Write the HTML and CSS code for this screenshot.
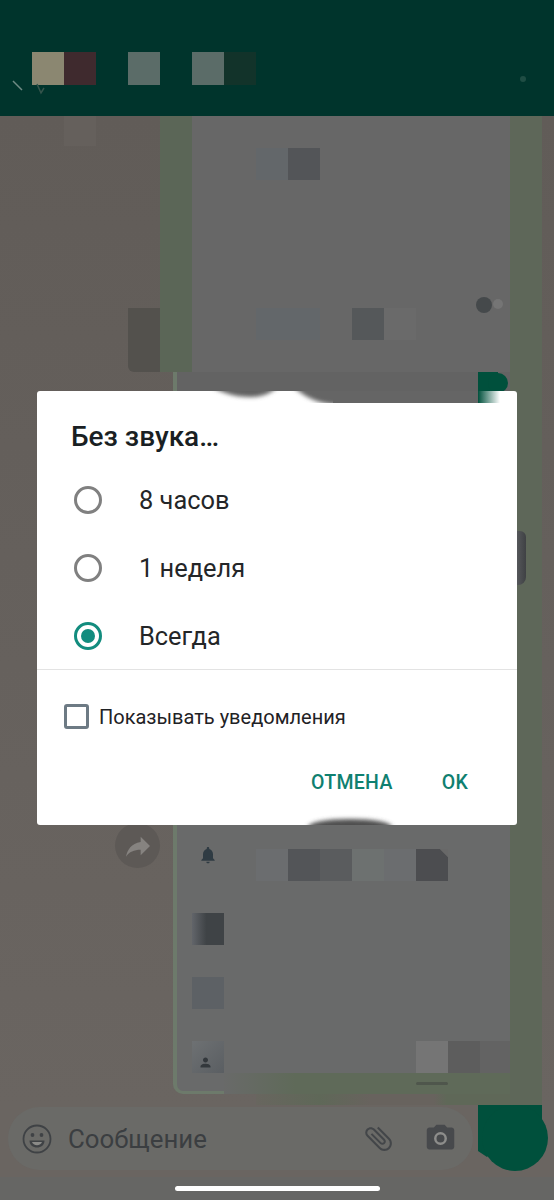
FILE: index.html
```html
<!DOCTYPE html>
<html lang="ru">
<head>
<meta charset="utf-8">
<title>Без звука</title>
<link rel="stylesheet" href="styles.css">
</head>
<body>
<div class="app">
  <header class="topbar">
    <svg class="ticks" viewBox="0 0 40 24" width="40" height="24"><path d="M3 3l9 9" stroke="#6f8a84" stroke-width="1.500"/><path d="M27 6l4 9 3-5" stroke="#35544c" stroke-width="1.500" fill="none"/></svg>
    <div class="name-row">
      <span class="hb hb-beige"></span><span class="hb hb-wine"></span>
      <span class="hb hb-teal hb-gap"></span>
      <span class="hb hb-teal hb-gap"></span><span class="hb hb-dark"></span>
    </div>
    <span class="menu-dot"></span>
  </header>

  <main class="chat">
    <div class="wall-patch"></div>
    <div class="stripe-top"></div>
    <div class="stripe-right"></div>
    <div class="bubble-top"></div>
    <div class="bubble-low"></div>
    <div class="foot-right"></div>
    <div class="foot-band"></div>
    <div class="bubble-foot"></div>
    <div class="foot-mark"></div>

    <div class="t t-a t1"></div><div class="t t-b t2"></div>
    <div class="t t-c t3"></div>
    <div class="t t-a t4"></div>
    <div class="t t-e t5"></div>
    <div class="t t-f t6"></div>

    <div class="t t-g t7"></div><div class="t t-b t8"></div><div class="t t-h t9"></div>
    <div class="t t-i t10"></div><div class="t t-g t11"></div><div class="t t-j t12"></div>
    <div class="bell-cell">
      <svg viewBox="0 0 24 24" width="20" height="20"><path fill="#2f3b43" d="M12 22c1.100 0 2-.9 2-2h-4c0 1.100.9 2 2 2zm6-6v-5c0-3.070-1.630-5.640-4.500-6.320V4c0-.83-.67-1.500-1.500-1.500s-1.500.67-1.500 1.500v.68C7.640 5.360 6 7.920 6 11v5l-2 2v1h16v-1l-2-2z"/></svg>
    </div>

    <div class="t t-k t13"></div>
    <div class="t t-l t14"></div>
    <div class="t t-m t15">
      <svg viewBox="0 0 24 24" width="15" height="15"><path fill="#33383c" d="M12 12c2.200 0 4-1.800 4-4s-1.800-4-4-4-4 1.800-4 4 1.800 4 4 4zm0 2c-2.700 0-8 1.300-8 4v2h16v-2c0-2.700-5.300-4-8-4z"/></svg>
    </div>
    <div class="t t-n t16"></div><div class="t t-o t17"></div><div class="t t-p t18"></div>

    <svg class="read-mark" viewBox="0 0 32 40" width="32" height="40"><path fill="#00503c" d="M0 0h20v40H0z"/><circle cx="20" cy="11" r="10" fill="#00503c"/></svg>
    <svg class="scroll-dot" viewBox="0 0 34 18" width="34" height="18"><circle cx="24" cy="8" r="5" fill="#757575"/><circle cx="10" cy="9" r="8" fill="#45494b"/></svg>
    <div class="forward">
      <svg viewBox="0 0 24 24" width="32" height="32"><path fill="#868380" d="M14 9V5l7 7-7 7v-4.100c-5 0-8.500 1.600-11 5.100 1-5 4-10 11-11z"/></svg>
    </div>
  </main>

  <footer class="bottom">
    <div class="input-row">
      <div class="composer">
        <svg class="ic-emoji" viewBox="0 0 30 30" width="30" height="30">
          <circle cx="15" cy="15" r="13.500" fill="none" stroke="#3f4245" stroke-width="1.800"/>
          <circle cx="10.500" cy="11" r="1.900" fill="#3f4245"/><circle cx="19.500" cy="11" r="1.900" fill="#3f4245"/>
          <path d="M7.500 16.500h15c0 4.500-3.400 7-7.500 7s-7.500-2.500-7.500-7z" fill="#3f4245"/>
          <path d="M10 18h10c-.6 2-2.600 3.200-5 3.200S10.600 20 10 18z" fill="#8b8b88"/>
        </svg>
        <span class="placeholder">Сообщение</span>
        <svg class="ic-clip" viewBox="0 0 24 24" width="33" height="33"><path fill="#434649" d="M16.500 6v11.500c0 2.210-1.790 4-4 4s-4-1.790-4-4V5c0-1.380 1.120-2.500 2.500-2.500s2.500 1.120 2.500 2.500v10.500c0 .55-.45 1-1 1s-1-.45-1-1V6H10v9.500c0 1.380 1.120 2.500 2.500 2.500s2.500-1.120 2.500-2.500V5c0-2.210-1.790-4-4-4S7 2.790 7 5v12.500c0 3.040 2.460 5.500 5.500 5.500s5.500-2.460 5.500-5.500V6h-1.500z"/></svg>
        <svg class="ic-cam" viewBox="0 0 24 24" width="33" height="33"><path fill="#47494c" d="M9 2L7.170 4H4c-1.100 0-2 .9-2 2v12c0 1.100.9 2 2 2h16c1.100 0 2-.9 2-2V6c0-1.100-.9-2-2-2h-3.170L15 2H9z"/><circle cx="12" cy="12" r="3.800" fill="#47494c" stroke="#8d8d8b" stroke-width="1.800"/></svg>
      </div>
      <svg class="send" viewBox="0 0 70 66" width="70" height="66"><path fill="#00503c" d="M0 0h64v40H20L9 52 0 46z"/><circle cx="37" cy="33" r="33" fill="#00503c"/></svg>
    </div>
    <div class="navbar"><span class="pill"></span></div>
  </footer>

  <section class="dialog" role="dialog">
    <h2 class="dialog-title">Без звука…</h2>
    <div class="options">
      <div class="option"><span class="radio"></span><span>8 часов</span></div>
      <div class="option"><span class="radio"></span><span>1 неделя</span></div>
      <div class="option"><span class="radio radio-on"></span><span>Всегда</span></div>
    </div>
    <div class="check-row"><span class="checkbox"></span><span>Показывать уведомления</span></div>
    <div class="actions"><span class="btn">ОТМЕНА</span><span class="btn">OK</span></div>
    <svg class="edge-top" viewBox="0 0 480 12" width="480" height="12">
      <defs>
        <filter id="soft" x="-20%" y="-50%" width="140%" height="200%"><feGaussianBlur stdDeviation="2"/></filter>
        <linearGradient id="fade"><stop offset="0" stop-color="#00503c"/><stop offset="1" stop-color="#00503c" stop-opacity="0"/></linearGradient>
      </defs>
      <path d="M172 -6C190 6 222 12 238 -2L244 -6Z" fill="#616161" filter="url(#soft)"/>
      <path d="M254 -6C266 4 276 12 300 14H330V-6Z" fill="#656565" filter="url(#soft)"/>
      <rect x="296" y="0" width="145" height="12" fill="#656565"/>
      <rect x="441" y="0" width="22" height="12" fill="url(#fade)"/>
    </svg>
    <svg class="edge-bottom" viewBox="0 0 480 12" width="480" height="12">
      <defs><filter id="soft2" x="-20%" y="-50%" width="140%" height="200%"><feGaussianBlur stdDeviation="2"/></filter></defs>
      <ellipse cx="313" cy="14" rx="42" ry="8" fill="#4f4f4f" filter="url(#soft2)"/>
    </svg>
    <span class="edge-block"></span>
  </section>
</div>
</body>
</html>
```

FILE: styles.css
```css
* { box-sizing: border-box; }
html, body { margin: 0; padding: 0; }
body { background: #615c58; font-family: Roboto, "Noto Sans", sans-serif; }

.app {
  position: relative;
  width: 554px;
  height: 1200px;
  overflow: hidden;
  display: flex;
  flex-direction: column;
  background: #635e5a;
}

/* header */
.topbar {
  position: relative;
  height: 116px;
  flex: none;
  background: #00342c;
  padding: 52px 0 0 32px;
}
.name-row { display: flex; height: 33px; }
.hb { width: 32px; height: 33px; display: block; }
.hb-beige { background: #8b8771; }
.hb-wine { background: #3f2a2e; }
.hb-teal { background: #5b6c68; }
.hb-dark { background: #12332a; }
.hb-gap { margin-left: 32px; }
.ticks { position: absolute; left: 10px; top: 78px; }
.menu-dot {
  position: absolute;
  left: 520px;
  top: 76px;
  width: 6px;
  height: 6px;
  border-radius: 50%;
  background: #1f4d44;
}

/* chat mosaic */
.chat {
  position: relative;
  flex: none;
  height: 989px;
  display: grid;
  grid-template-columns: repeat(5, 32px) 13px 4px 15px repeat(9, 32px) 30px 32px 12px;
  grid-template-rows: 32px 32px 128px 32px 32px 477px repeat(7, 32px) 21px 11px;
  background: linear-gradient(#615c58, #6a6561);
}
.wall-patch { grid-area: 1 / 3 / 2 / 4; height: 30px; background: #65605c; }
.stripe-top { grid-area: 1 / 6 / 6 / 9; background: #5b6657; }
.stripe-right { grid-area: 1 / 19 / 16 / 20; background: #5e6759; }
.bubble-top { grid-area: 1 / 9 / 6 / 19; background: #676767; }
.bubble-low {
  grid-area: 6 / 7 / 14 / 19;
  background: linear-gradient(#636363 0, #636363 20px, #696a6a 21px);
  border-left: 4px solid #6d7a6b;
}
.foot-right { grid-area: 14 / 10 / 15 / 19; background: linear-gradient(90deg, #696a69, #5f6a59 25%); }
.foot-band { grid-area: 15 / 11 / 16 / 19; background: linear-gradient(90deg, #68665f, #5f6858 25%, #68635e 45%, #68635e 70%, #5f6858 75%); }
.bubble-foot {
  grid-area: 14 / 7 / 15 / 10;
  background: #696a6a;
  border-left: 4px solid #6d7a6b;
  border-bottom: 3px solid #6d7a6b;
  border-radius: 0 0 0 10px;
}
.foot-mark {
  grid-area: 14 / 16 / 15 / 17;
  align-self: center;
  height: 3px;
  background: #4f564c;
  border-radius: 2px;
}

.t { display: block; }
.t1 { grid-area: 2 / 11 / 3 / 12; }
.t2 { grid-area: 2 / 12 / 3 / 13; }
.t3 { grid-area: 4 / 5 / 6 / 6; }
.t4 { grid-area: 4 / 11 / 5 / 13; }
.t5 { grid-area: 4 / 14 / 5 / 15; }
.t6 { grid-area: 4 / 15 / 5 / 16; }
.t7 { grid-area: 7 / 11 / 8 / 12; }
.t8 { grid-area: 7 / 12 / 8 / 13; }
.t9 { grid-area: 7 / 13 / 8 / 14; }
.t10 { grid-area: 7 / 14 / 8 / 15; }
.t11 { grid-area: 7 / 15 / 8 / 16; }
.t12 { grid-area: 7 / 16 / 8 / 17; }
.t13 { grid-area: 9 / 9 / 10 / 10; }
.t14 { grid-area: 11 / 9 / 12 / 10; }
.t15 { grid-area: 13 / 9 / 14 / 10; display: flex; align-items: flex-end; padding: 0 0 3px 6px; }
.t16 { grid-area: 13 / 16 / 14 / 17; }
.t17 { grid-area: 13 / 17 / 14 / 18; }
.t18 { grid-area: 13 / 18 / 14 / 19; }

.t-a { background: #63676a; }
.t-b { background: #535558; }
.t-c { background: #53514d; border-radius: 0 0 0 6px; }
.t-e { background: #55585a; }
.t-f { background: #6a6a6a; }
.t-g { background: #6b6d6f; }
.t-h { background: #5a5c5e; }
.t-i { background: #6d7170; }
.t-j { background: linear-gradient(225deg, #686868 0 12%, #4c4d50 14%); }
.t-k { background: linear-gradient(90deg, #62656a, #3f4346 45%); }
.t-l { background: #5d6165; }
.t-m { background: linear-gradient(135deg, #6e7173, #5a5e62); }
.t-n { background: #757575; }
.t-o { background: #5d5d5d; }
.t-p { background: #636363; }

.bell-cell {
  grid-area: 7 / 9 / 8 / 10;
  display: flex;
  justify-content: center;
  align-items: flex-start;
  margin-top: -4px;
}
.read-mark { grid-area: 6 / 18 / 7 / 20; margin-left: -2px; align-self: start; }
.scroll-dot { position: absolute; left: 474px; top: 180px; }
.forward {
  position: absolute;
  left: 115px;
  top: 707px;
  width: 45px;
  height: 45px;
  border-radius: 50%;
  background: #5d5956;
  display: flex;
  align-items: center;
  justify-content: center;
}

/* composer */
.bottom { flex: none; height: 95px; display: flex; flex-direction: column; }
.input-row { height: 72px; display: flex; align-items: flex-start; padding-left: 8px; background: #6a6561; }
.composer {
  width: 465px;
  height: 63px;
  margin-top: 2px;
  border-radius: 32px;
  background: #6a6a67;
  display: flex;
  align-items: center;
  padding: 0 16px 0 14px;
}
.ic-emoji { flex: none; }
.placeholder { margin-left: 16px; font-size: 25.800px; color: #3b3e41; flex: 1; }
.ic-clip { transform: rotate(-45deg); margin-right: 29px; flex: none; }
.ic-cam { flex: none; }
.send { margin-left: 5px; flex: none; }
.navbar { height: 23px; background: #666664; display: flex; justify-content: center; padding-top: 9px; }
.pill { width: 205px; height: 5px; border-radius: 3px; background: #ffffff; }

/* dialog */
.dialog {
  position: absolute;
  left: 37px;
  top: 391px;
  width: 480px;
  height: 434px;
  background: #ffffff;
  border-radius: 3px;
  display: flex;
  flex-direction: column;
}
.dialog-title {
  margin: 0;
  padding: 27px 34px 10px;
  font-size: 28px;
  line-height: 38px;
  font-weight: 500;
  color: #1a1f23;
}
.options { display: flex; flex-direction: column; margin-bottom: -1px; }
.option {
  height: 68px;
  display: flex;
  align-items: center;
  gap: 37px;
  padding-left: 37px;
  font-size: 25.400px;
  color: #242628;
}
.radio {
  width: 28px;
  height: 28px;
  border-radius: 50%;
  border: 3px solid #808080;
  flex: none;
  display: flex;
  align-items: center;
  justify-content: center;
}
.radio-on { border-color: #128c7e; }
.radio-on::after { content: ""; width: 14px; height: 14px; border-radius: 50%; background: #128c7e; }
.check-row {
  height: 94px;
  border-top: 1px solid #e3e3e3;
  display: flex;
  align-items: center;
  gap: 10px;
  padding-left: 27px;
  font-size: 20px;
  color: #1f2225;
}
.checkbox { width: 25px; height: 25px; border: 3px solid #6d7a84; border-radius: 3px; flex: none; }
.actions {
  display: flex;
  justify-content: flex-end;
  align-items: center;
  gap: 49px;
  height: 38px;
  padding-right: 49px;
}
.btn { font-size: 19.500px; font-weight: 500; color: #0f8070; letter-spacing: .3px; }

.edge-top { position: absolute; left: 0; top: 0; display: block; }
.edge-bottom { position: absolute; left: 0; bottom: 0; display: block; }
.edge-block {
  position: absolute;
  left: 100%;
  top: 140px;
  width: 9px;
  height: 54px;
  background: linear-gradient(90deg, #55575a, #3f4144);
  border-radius: 0 6px 8px 0;
}
```
